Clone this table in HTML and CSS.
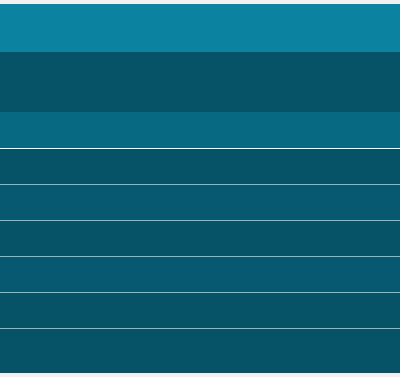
FILE: index.html
```html
<!DOCTYPE html>
<html>
<head>
<meta charset="utf-8">
<link rel="stylesheet" href="styles.css">
</head>
<body>
<div class="panel">
  <div class="header"></div>
  <div class="hero"></div>
  <div class="toolbar"></div>
  <div class="list">
    <div class="row"></div>
    <div class="row alt"></div>
    <div class="row"></div>
    <div class="row alt"></div>
    <div class="row"></div>
    <div class="row last"></div>
  </div>
</div>
</body>
</html>
```
FILE: styles.css
```css
html, body {
  margin: 0;
  padding: 0;
  background: #f0f0f0;
  font-family: "Liberation Sans", Arial, sans-serif;
}
body {
  padding-top: 4px;
  height: 377px;
  box-sizing: border-box;
  overflow: hidden;
}
.panel {
  display: flex;
  flex-direction: column;
  width: 400px;
}
.header {
  height: 48px;
  background: #0b83a0;
}
.hero {
  height: 60px;
  background: #065266;
}
.toolbar {
  height: 36px;
  background: #076a82;
  border-bottom: 1px solid #ffffff;
}
.list {
  display: flex;
  flex-direction: column;
}
.row {
  height: 35px;
  background: #065266;
  border-bottom: 1px solid #9bb4ba;
}
.row.alt {
  background: #065970;
}
.row.last {
  height: 44px;
  border-bottom: none;
}
```
